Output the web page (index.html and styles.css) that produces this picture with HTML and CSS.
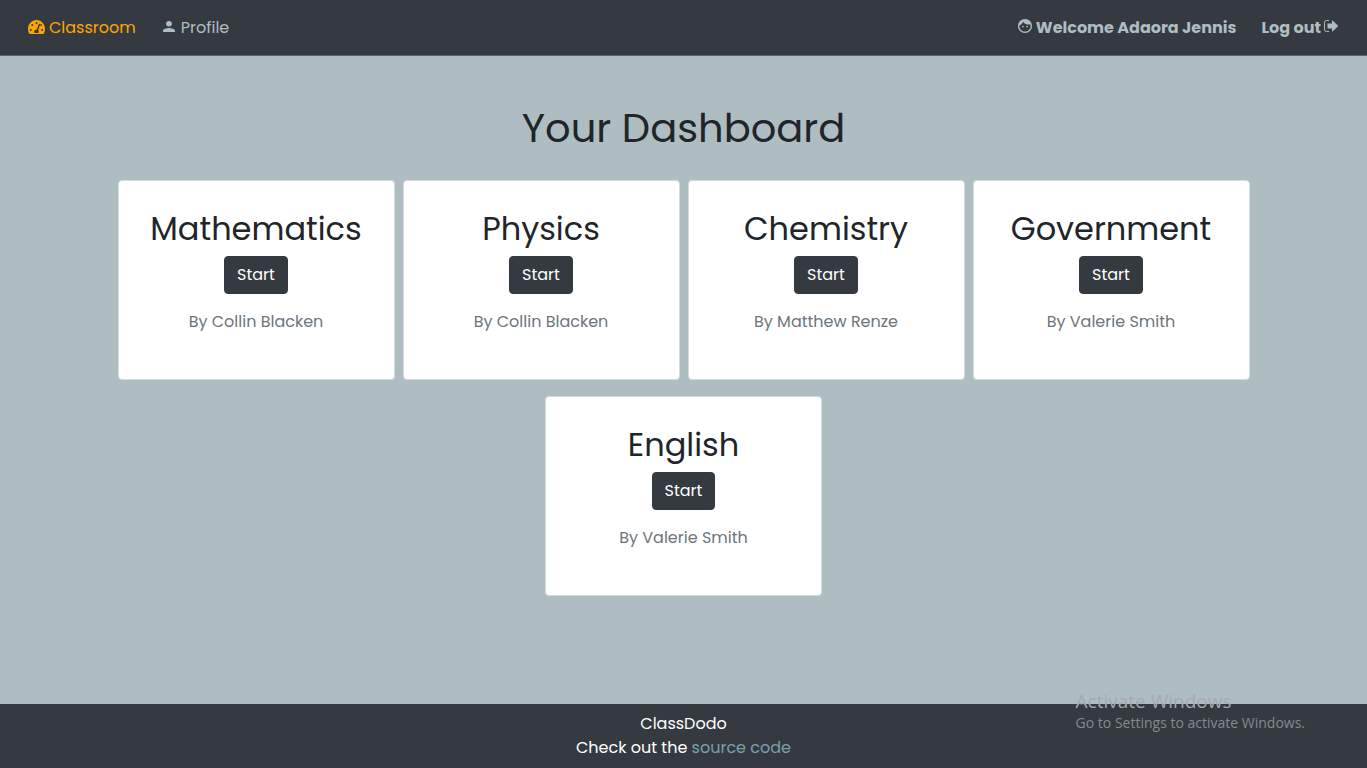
FILE: index.html
```html
<!DOCTYPE html>
<html lang="en">
<head>
  <meta charset="utf-8">
  <meta name="viewport" content="width=device-width, initial-scale=1">
  <title>Your Dashboard</title>
  <link rel="stylesheet" href="styles.css">
</head>
<body>
  <header class="topbar">
    <nav class="nav">
      <a class="nav-link active" href="#">
        <svg class="icon gauge" viewBox="0 0 576 448" preserveAspectRatio="none" aria-hidden="true"><path fill-rule="evenodd" d="M288 0C129 0 0 129 0 288c0 53 14 102 39 145 6 9 16 15 27 15h444c11 0 21-6 27-15 25-43 39-92 39-145C576 129 447 0 288 0zM288 64a34 34 0 1 1 0 68 34 34 0 0 1 0-68zM96 354a34 34 0 1 1 0-68 34 34 0 0 1 0 68zM144 194a34 34 0 1 1 0-68 34 34 0 0 1 0 68zM391 119c13 4 20 18 16 31l-61 184c18 14 20 32 20 50 0 12-3 22-9 32H219c-6-10-9-20-9-32 0-42 34-78 91-80l60-169c4-13 17-20 30-16zM452 194a34 34 0 0 1-36-42l8-22a34 34 0 1 1 28 64zM480 354a34 34 0 1 1 0-68 34 34 0 0 1 0 68z"/></svg>
        <span>Classroom</span>
      </a>
      <a class="nav-link profile" href="#">
        <svg class="icon person" viewBox="4 4 16 16" preserveAspectRatio="none" aria-hidden="true"><path d="M12 12c2.210 0 4-1.790 4-4s-1.790-4-4-4-4 1.790-4 4 1.790 4 4 4zm0 2c-2.670 0-8 1.340-8 4v2h16v-2c0-2.660-5.330-4-8-4z"/></svg>
        <span>Profile</span>
      </a>
    </nav>
    <nav class="nav account">
      <a class="nav-link" href="#">
        <svg class="icon face" viewBox="2 2 20 20" aria-hidden="true"><path d="M9 11.750c-.69 0-1.250.56-1.250 1.250s.56 1.250 1.250 1.250 1.250-.56 1.250-1.250-.56-1.250-1.250-1.250zm6 0c-.69 0-1.250.56-1.250 1.250s.56 1.250 1.250 1.250 1.250-.56 1.250-1.250-.56-1.250-1.250-1.250zM12 2C6.480 2 2 6.480 2 12s4.480 10 10 10 10-4.480 10-10S17.520 2 12 2zm0 18c-4.410 0-8-3.590-8-8 0-.29.020-.58.050-.86 2.360-1.050 4.230-2.980 5.210-5.370C11.070 8.330 14.050 10 17.420 10c.78 0 1.530-.09 2.250-.26.210.71.330 1.470.33 2.260 0 4.410-3.590 8-8 8z"/></svg>
        <span>Welcome Adaora Jennis</span>
      </a>
      <a class="nav-link logout" href="#">
        <span>Log out</span>
        <svg class="icon exit" viewBox="0 0 14 12" aria-hidden="true"><path fill="none" stroke="currentColor" d="M5 .5H2.500a2 2 0 0 0-2 2v7a2 2 0 0 0 2 2H5"/><path d="M3.500 3.500h4.500V1q0-.9.800-.3l5 4.800q.5.500 0 1l-5 4.800q-.8.600-.8-.3V8.500H3.500z"/></svg>
      </a>
    </nav>
  </header>

  <main class="dashboard">
    <h1 class="title">Your Dashboard</h1>
    <div class="cards">
      <article class="card"><h2 class="subject">Mathematics</h2><button class="start" type="button">Start</button><p class="teacher">By Collin Blacken</p></article>
      <article class="card"><h2 class="subject">Physics</h2><button class="start" type="button">Start</button><p class="teacher">By Collin Blacken</p></article>
      <article class="card"><h2 class="subject">Chemistry</h2><button class="start" type="button">Start</button><p class="teacher">By Matthew Renze</p></article>
      <article class="card"><h2 class="subject">Government</h2><button class="start" type="button">Start</button><p class="teacher">By Valerie Smith</p></article>
      <article class="card"><h2 class="subject">English</h2><button class="start" type="button">Start</button><p class="teacher">By Valerie Smith</p></article>
    </div>
  </main>

  <footer class="footer">
    <p class="footer-line">ClassDodo</p>
    <p class="footer-line">Check out the <a class="source" href="#">source code</a></p>
  </footer>

  <aside class="watermark">
    <p class="watermark-title">Activate Windows</p>
    <p class="watermark-text">Go to Settings to activate Windows.</p>
  </aside>
</body>
</html>
```

FILE: styles.css
```css
* {
  box-sizing: border-box;
}

body {
  display: flex;
  flex-direction: column;
  min-height: 100vh;
  margin: 0;
  background: #aebdc2;
  color: #212529;
  font: 400 16px/24px Poppins, Inter, "Liberation Sans", sans-serif;
}

h1, h2, p {
  margin: 0;
}

.topbar {
  display: flex;
  justify-content: space-between;
  padding: 16px 29px 15px 28px;
  border-bottom: 1px solid #59636b;
  background: #343a40;
}

.nav {
  display: flex;
  gap: 27px;
}

.account {
  gap: 25px;
  font-weight: 700;
}

.nav-link {
  display: flex;
  align-items: center;
  gap: 4px;
  color: #aebdc2;
  text-decoration: none;
}

.active {
  color: #ffa500;
}

.profile {
  gap: 6px;
}

.logout {
  gap: 3px;
}

.icon {
  display: block;
  margin-bottom: 4px;
  fill: currentColor;
}

.gauge {
  width: 17px;
  height: 14px;
  margin-bottom: 2px;
}

.person {
  width: 12px;
  height: 11px;
}

.face {
  width: 14px;
  height: 14px;
}

.exit {
  width: 14px;
  height: 12px;
}

.dashboard {
  flex: 1;
  padding: 48px 16px 0;
  text-align: center;
}

.title {
  margin-bottom: 28px;
  font-size: 40px;
  font-weight: 400;
  line-height: 48px;
}

.cards {
  display: flex;
  flex-wrap: wrap;
  justify-content: center;
  gap: 16px 8px;
  max-width: 1133px;
  margin: 0 auto;
}

.card {
  flex: 0 0 277px;
  min-height: 200px;
  padding: 28px 20px;
  border: 1px solid #d5dcdf;
  border-radius: 4px;
  background: #fff;
}

.subject {
  margin-bottom: 8px;
  font-size: 32px;
  font-weight: 400;
  line-height: 39px;
}

.start {
  display: block;
  margin: 0 auto 16px;
  padding: 6px 12px;
  border: 1px solid #343a40;
  border-radius: 4px;
  background: #343a40;
  color: #fff;
  font: inherit;
}

.teacher {
  color: #6c757d;
}

.footer {
  padding: 8px 16px;
  background: #343a40;
  color: #fff;
  text-align: center;
}

.source {
  color: #76a2ac;
  text-decoration: none;
}

.watermark {
  position: absolute;
  right: 62px;
  bottom: 35px;
  color: #85898c;
  font-family: "Segoe UI", "Open Sans", "Noto Sans", sans-serif;
}

.watermark-title {
  color: #a4aaac;
  font-size: 19px;
  line-height: 24px;
}

.watermark-text {
  font-size: 14px;
  line-height: 20px;
}
```
